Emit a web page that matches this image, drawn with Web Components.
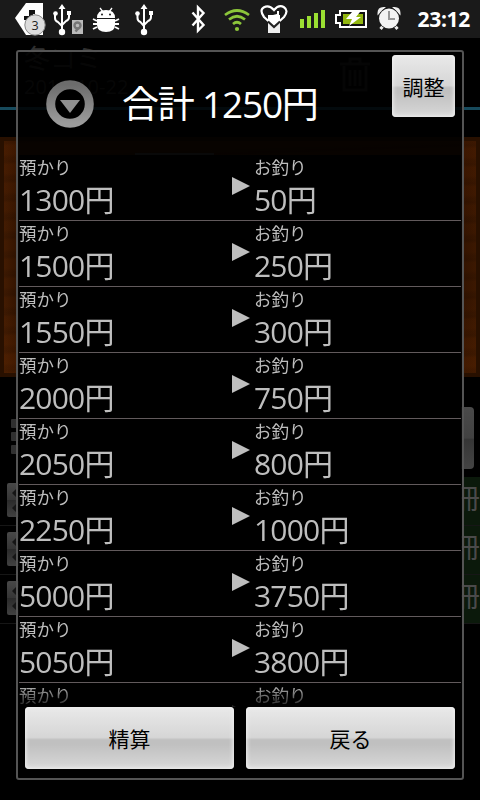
<!DOCTYPE html>
<html lang="ja">
<head>
<meta charset="utf-8">
<title>合計</title>
<style>
    html, body {
        margin: 0;
        height: 100%;
        overflow: hidden;
        background: #000;
        font-family: "Open Sans", "Noto Sans CJK JP", sans-serif;
    }
</style>
</head>
<body>
<register-screen></register-screen>

<script>
const ICONS = {
    tag: {
        width: 32,
        body: `<path d="M11 3H28V35H11L0 18Z" fill="#fff"/>
            <path d="M14 10h6v4h-2v6h-9v-4h5z" fill="#111"/>
            <circle cx="20" cy="25" r="10.200" fill="#ddd" stroke="#888"/>
            <text x="20" y="29.500" text-anchor="middle" font-size="12.500" fill="#222">3</text>`
    },
    usbDebug: {
        width: 31,
        body: `<path d="M9 8V31M2 14v4q0 3 3 4l4 4M16 13v4q0 3-3 4l-4 4" fill="none" stroke="#fff" stroke-width="2"/>
            <path d="M9 4l3.500 5h-7zM14 11h4v4h-4z" fill="#fff"/>
            <circle cx="2.500" cy="13.500" r="2.300" fill="#fff"/><circle cx="9" cy="32" r="3.200" fill="#fff"/>
            <rect x="19" y="20" width="11" height="14" fill="#bbb"/>
            <path d="M22.500 31.500l3-3.500" stroke="#777" stroke-width="2.500"/>
            <circle cx="24.500" cy="25.500" r="3" fill="none" stroke="#777" stroke-width="2.400"/>`
    },
    usb: {
        width: 20,
        body: `<path d="M9 8V31M2.500 14v4q0 3 3 4l3.500 4M16 13v4q0 3-3 4l-4 4" fill="none" stroke="#fff" stroke-width="2"/>
            <path d="M9 4l3.500 5h-7zM14 11h4v4h-4z" fill="#fff"/>
            <circle cx="2.500" cy="13.500" r="2.300" fill="#fff"/><circle cx="9" cy="32" r="3.200" fill="#fff"/>`
    },
    android: {
        width: 28,
        body: `<path d="M8 8l3 4M20 8l-3 4" stroke="#fff" stroke-width="1.300"/>
            <path d="M5 18q0-8 9-8t9 8z" fill="#fff"/>
            <path d="M5 19h18v6q0 7-9 7t-9-7z" fill="#fff"/>
            <path d="M5 21l-4-2M5 24H1M5 27l-4 2M23 21l4-2M23 24h4M23 27l4 2" stroke="#fff" stroke-width="1.800"/>
            <circle cx="10" cy="14.500" r="1" fill="#1a1a1a"/><circle cx="18" cy="14.500" r="1" fill="#1a1a1a"/>`
    },
    bluetooth: {
        width: 15,
        body: `<path d="M1.500 12.500L12.500 25 7 30.500V7.500L12.500 13 1.500 25.500" fill="none" stroke="#fff" stroke-width="2.400"/>`
    },
    wifi: {
        width: 26,
        body: `<g fill="none" stroke="#8cc63a" stroke-width="2.700">
            <path d="M1 15q12-9 24 0"/><path d="M5 19.500q8-6.500 16 0"/><path d="M9 24q4-3.500 8 0"/></g>
            <circle cx="13" cy="29" r="2.100" fill="#8cc63a"/>`
    },
    heart: {
        width: 28,
        body: `<path d="M8 16h12v17H8z" fill="#eee"/>
            <path d="M14 26L4 17Q-1 10 4 7.200T14 10Q19 4 24 7.200T24 17Z" fill="#1a1a1a" stroke="#fff" stroke-width="2.200"/>
            <path d="M8 15h5l4-1v-3h2v4h1v6l-6 5-6-5z" fill="#fff"/>
            <path d="M8 21.500L14 27l6-5.500" fill="none" stroke="#222" stroke-width="2.200"/>`
    },
    signal: {
        width: 27,
        body: `<path d="M1 19h4v9H1zM8 16h4v12H8zM15 13h4v15h-4zM22 10h4v18h-4z" fill="#9bdf32"/>`
    },
    battery: {
        width: 32,
        body: `<path d="M5 11H31V27H5V23H1V15H5Z" fill="#111" stroke="#fff" stroke-width="2"/>
            <path d="M8 14h20v10H8z" fill="#92b60f"/>
            <path d="M17 12h8l-4 5h5L14 26l3-7h-6z" fill="#fff"/>`
    },
    alarm: {
        width: 24,
        body: `<path d="M1.500 13q0-5 5-5zM22.500 13q0-5-5-5z" fill="#eee" stroke="#eee" stroke-width="2"/>
            <path d="M6 26l-2.500 3M18 26l2.500 3" stroke="#eee" stroke-width="3"/>
            <circle cx="12" cy="18.500" r="10.700" fill="#1a1a1a"/><circle cx="12" cy="18.500" r="10" fill="#f4f4f4"/>
            <path d="M12 11v8h6" fill="none" stroke="#999" stroke-width="2"/>`
    }
};

class StatusIcon extends HTMLElement {
    constructor () {
        super();

        this.attachShadow({ mode: 'open' });
    }

    connectedCallback () {
        const { width, body } = ICONS[this.getAttribute('name')];

        this.shadowRoot.innerHTML = `
        <style>
            :host {
                display: block;
                flex: none;
            }
            svg {
                display: block;
            }
        </style>
        <svg width="${width}" height="38" viewBox="0 0 ${width} 38">${body}</svg>`;
    }
}

class StatusBar extends HTMLElement {
    constructor () {
        super();

        this.attachShadow({ mode: 'open' }).innerHTML = `
        <style>
            :host {
                display: flex;
                justify-content: space-between;
                height: 38px;
                box-sizing: border-box;
                padding: 0 10px 0 15px;
                background: #1a1a1a;
                color: #fff;
            }
            .group {
                display: flex;
            }
            .notices {
                gap: 6px;
            }
            .notices :nth-child(3) {
                margin-left: 2px;
            }
            .notices :nth-child(4) {
                margin-left: 9px;
            }
            .system {
                gap: 10px;
            }
            .system :nth-child(2) {
                margin-left: 8px;
            }
            .system :nth-child(5) {
                margin-left: -1px;
            }
            .system :nth-child(4) {
                margin-left: 1px;
            }
            .clock {
                margin-left: 6px;
                width: 53px;
                font: bold 21px/39px "Open Sans", sans-serif;
                text-align: right;
                white-space: nowrap;
                letter-spacing: -.3px;
            }
        </style>
        <div class="group notices">
            <status-icon name="tag"></status-icon>
            <status-icon name="usbDebug"></status-icon>
            <status-icon name="android"></status-icon>
            <status-icon name="usb"></status-icon>
        </div>
        <div class="group system">
            <status-icon name="bluetooth"></status-icon>
            <status-icon name="wifi"></status-icon>
            <status-icon name="heart"></status-icon>
            <status-icon name="signal"></status-icon>
            <status-icon name="battery"></status-icon>
            <status-icon name="alarm"></status-icon>
            <div class="clock">23:12</div>
        </div>`;
    }
}

// one line of the order list, mostly covered by the dialog
class StockRow extends HTMLElement {
    constructor () {
        super();

        this.attachShadow({ mode: 'open' }).innerHTML = `
        <style>
            :host {
                display: flex;
                justify-content: space-between;
                align-items: center;
                height: 49px;
                box-sizing: border-box;
                padding-left: 7px;
                border-bottom: 1px solid #161616;
            }
            .stepper {
                width: 30px;
                height: 34px;
                margin-top: -2px;
                border-radius: 2px;
                background: linear-gradient(#484848, #353535 50%, #2a2a2a 50%, #414141);
            }
            .unit {
                width: 60px;
                height: 48px;
                background: #0b190b;
                color: #4a4a4a;
                font-size: 28px;
                line-height: 42px;
                text-align: right;
            }
        </style>
        <svg class="stepper" viewBox="0 0 30 34">
            <path d="M5 10l5-5 5 5-5 5zM5 25l5-5 5 5-5 5z" fill="#151515"/>
        </svg>
        <div class="unit">冊</div>`;
    }
}

class StockPage extends HTMLElement {
    constructor () {
        super();

        this.attachShadow({ mode: 'open' }).innerHTML = `
        <style>
            :host {
                display: block;
                height: 762px;
                background: #000;
            }
            header {
                display: flex;
                justify-content: space-between;
                height: 69px;
                padding: 0 108px 0 24px;
                color: #303030;
                border-bottom: 3px solid #174a5c;
            }
            h2 {
                margin: 5px 0 0;
                font-size: 26px;
                line-height: 30px;
                font-weight: normal;
            }
            p {
                margin: 0;
                font-size: 20px;
                line-height: 28px;
            }
            .trash {
                margin-top: 18px;
            }
            .shelf {
                height: 240px;
                margin-top: 27px;
                box-sizing: border-box;
                border: 4px solid #281000;
                background:
                    repeating-linear-gradient(178deg, rgba(0, 0, 0, .12) 0 2px, transparent 5px 13px, rgba(0, 0, 0, .1) 17px 19px),
                    linear-gradient(rgba(80, 30, 0, .35), transparent 40%, transparent 70%, rgba(100, 40, 0, .35)),
                    linear-gradient(90deg, #441c02, #341400 12px, #341400 460px, #3c1801);
            }
            .slip {
                width: 79px;
                height: 2px;
                margin: 12px 0 0 131px;
                background: #444;
            }
            .tools {
                display: flex;
                justify-content: space-between;
                align-items: center;
                height: 100px;
                padding: 0 6px 0 11px;
            }
            .grip {
                display: grid;
                gap: 4px;
                margin-top: 18px;
            }
            .grip i {
                width: 24px;
                height: 9px;
                border-radius: 1px;
                background: #303030;
            }
            .key {
                width: 60px;
                height: 62px;
                margin-top: 22px;
                border-radius: 4px;
                background: linear-gradient(#4a4a4a, #424242 50%, #363636 52%, #444);
            }
        </style>
        <header>
            <div>
                <h2>冬コミ</h2>
                <p>2011-10-22</p>
            </div>
            <svg class="trash" width="34" height="38" viewBox="0 0 34 38" fill="none" stroke="#262626" stroke-width="3">
                <path d="M2 8h30M12 7V3h10v4M6 10v24h22V10M12 14v16M17 14v16M22 14v16"/>
            </svg>
        </header>
        <div class="shelf"><div class="slip"></div></div>
        <div class="tools">
            <div class="grip"><i></i><i></i><i></i></div>
            <div class="key"></div>
        </div>
        <stock-row></stock-row>
        <stock-row></stock-row>
        <stock-row></stock-row>`;
    }
}

class PushButton extends HTMLElement {
    constructor () {
        super();

        this.attachShadow({ mode: 'open' }).innerHTML = `
        <style>
            :host {
                display: block;
            }
            button {
                display: block;
                width: 100%;
                height: 62px;
                padding: 0 0 1px;
                border: 0;
                border-radius: 4px;
                background: linear-gradient(#e9e9e9, #d6d6d6 49%, #c0c0c0 53%, #c0c0c0 60%, #d8d8d8);
                box-shadow: inset 0 0 4px 1px #f0f0f0;
                color: #000;
                font: 21px "Open Sans", "Noto Sans CJK JP", sans-serif;
            }
        </style>
        <button><slot></slot></button>`;
    }
}

class ChangeRow extends HTMLElement {
    constructor () {
        super();

        this.attachShadow({ mode: 'open' }).innerHTML = `
        <style>
            :host {
                display: grid;
                grid-template-columns: 213px 22px 1fr;
                height: 66px;
                box-sizing: border-box;
                border-bottom: 1px solid #625a5c;
                color: #bebebe;
            }
            .label {
                height: 25px;
                font-size: 17.5px;
                line-height: 25px;
            }
            .amount {
                font-size: 30px;
                line-height: 40px;
                letter-spacing: -.8px;
            }
            svg {
                margin-top: 22px;
            }
        </style>
        <div>
            <div class="label">預かり</div>
            <div class="amount"><slot name="paid"></slot></div>
        </div>
        <svg width="18" height="18" viewBox="0 0 18 18"><path d="M0 0l18 9-18 9z" fill="#bebebe"/></svg>
        <div>
            <div class="label">お釣り</div>
            <div class="amount"><slot name="change"></slot></div>
        </div>`;
    }
}

class TotalDialog extends HTMLElement {
    constructor () {
        super();

        this.attachShadow({ mode: 'open' }).innerHTML = `
        <style>
            :host {
                display: flex;
                flex-direction: column;
                box-sizing: border-box;
                border: 2px solid #545454;
                border-radius: 3px;
                background: rgba(0, 0, 0, .86);
            }
            header {
                display: flex;
                height: 103px;
                padding: 0 7px 0 28px;
                box-sizing: border-box;
                color: #fff;
            }
            header svg {
                margin-top: 28px;
            }
            h1 {
                flex: 1;
                margin: 28px 0 0 28px;
                font-size: 37px;
                line-height: 48px;
                font-weight: normal;
                letter-spacing: -1.2px;
                white-space: nowrap;
            }
            push-button {
                flex: 1;
            }
            header push-button {
                flex: none;
                width: 63px;
                margin-top: 3px;
            }
            .list {
                height: 552px;
                margin: 0 1px;
                overflow: hidden;
                background: #000;
                -webkit-mask-image: linear-gradient(#000 530px, rgba(0, 0, 0, .15) 552px);
                mask-image: linear-gradient(#000 530px, rgba(0, 0, 0, .15) 552px);
            }
            footer {
                display: flex;
                gap: 12px;
                padding: 0 7px;
            }
        </style>
        <header>
            <svg width="48" height="48" viewBox="0 0 48 48">
                <defs>
                    <linearGradient id="ring" x2="0" y2="1">
                        <stop stop-color="#6c6c6c"/><stop offset="1" stop-color="#9c9c9c"/>
                    </linearGradient>
                </defs>
                <circle cx="24" cy="24" r="19.300" fill="#000" stroke="url(#ring)" stroke-width="9"/>
                <path d="M14 20h20L24 33z" fill="#8f8f8f"/>
            </svg>
            <h1><slot name="title"></slot></h1>
            <push-button>調整</push-button>
        </header>
        <div class="list"><slot></slot></div>
        <footer>
            <push-button>精算</push-button>
            <push-button>戻る</push-button>
        </footer>`;
    }
}

class RegisterScreen extends HTMLElement {
    constructor () {
        super();

        this.total = 1250;
        this.payments = [1300, 1500, 1550, 2000, 2050, 2250, 5000, 5050];

        this.attachShadow({ mode: 'open' }).innerHTML = `
        <style>
            :host {
                display: block;
                position: relative;
                width: 480px;
                height: 800px;
                overflow: hidden;
            }
            total-dialog {
                position: absolute;
                left: 16px;
                top: 50px;
                width: 448px;
                height: 730px;
            }
        </style>
        <status-bar></status-bar>
        <stock-page></stock-page>
        <total-dialog>
            <span slot="title">合計 ${this.total}円</span>
            ${this.payments.map((paid) => `
            <change-row>
                <span slot="paid">${paid}円</span>
                <span slot="change">${paid - this.total}円</span>
            </change-row>`).join('')}
            <change-row></change-row>
        </total-dialog>`;
    }
}

customElements.define('status-icon', StatusIcon);
customElements.define('status-bar', StatusBar);
customElements.define('stock-row', StockRow);
customElements.define('stock-page', StockPage);
customElements.define('push-button', PushButton);
customElements.define('change-row', ChangeRow);
customElements.define('total-dialog', TotalDialog);
customElements.define('register-screen', RegisterScreen);
</script>
</body>
</html>
